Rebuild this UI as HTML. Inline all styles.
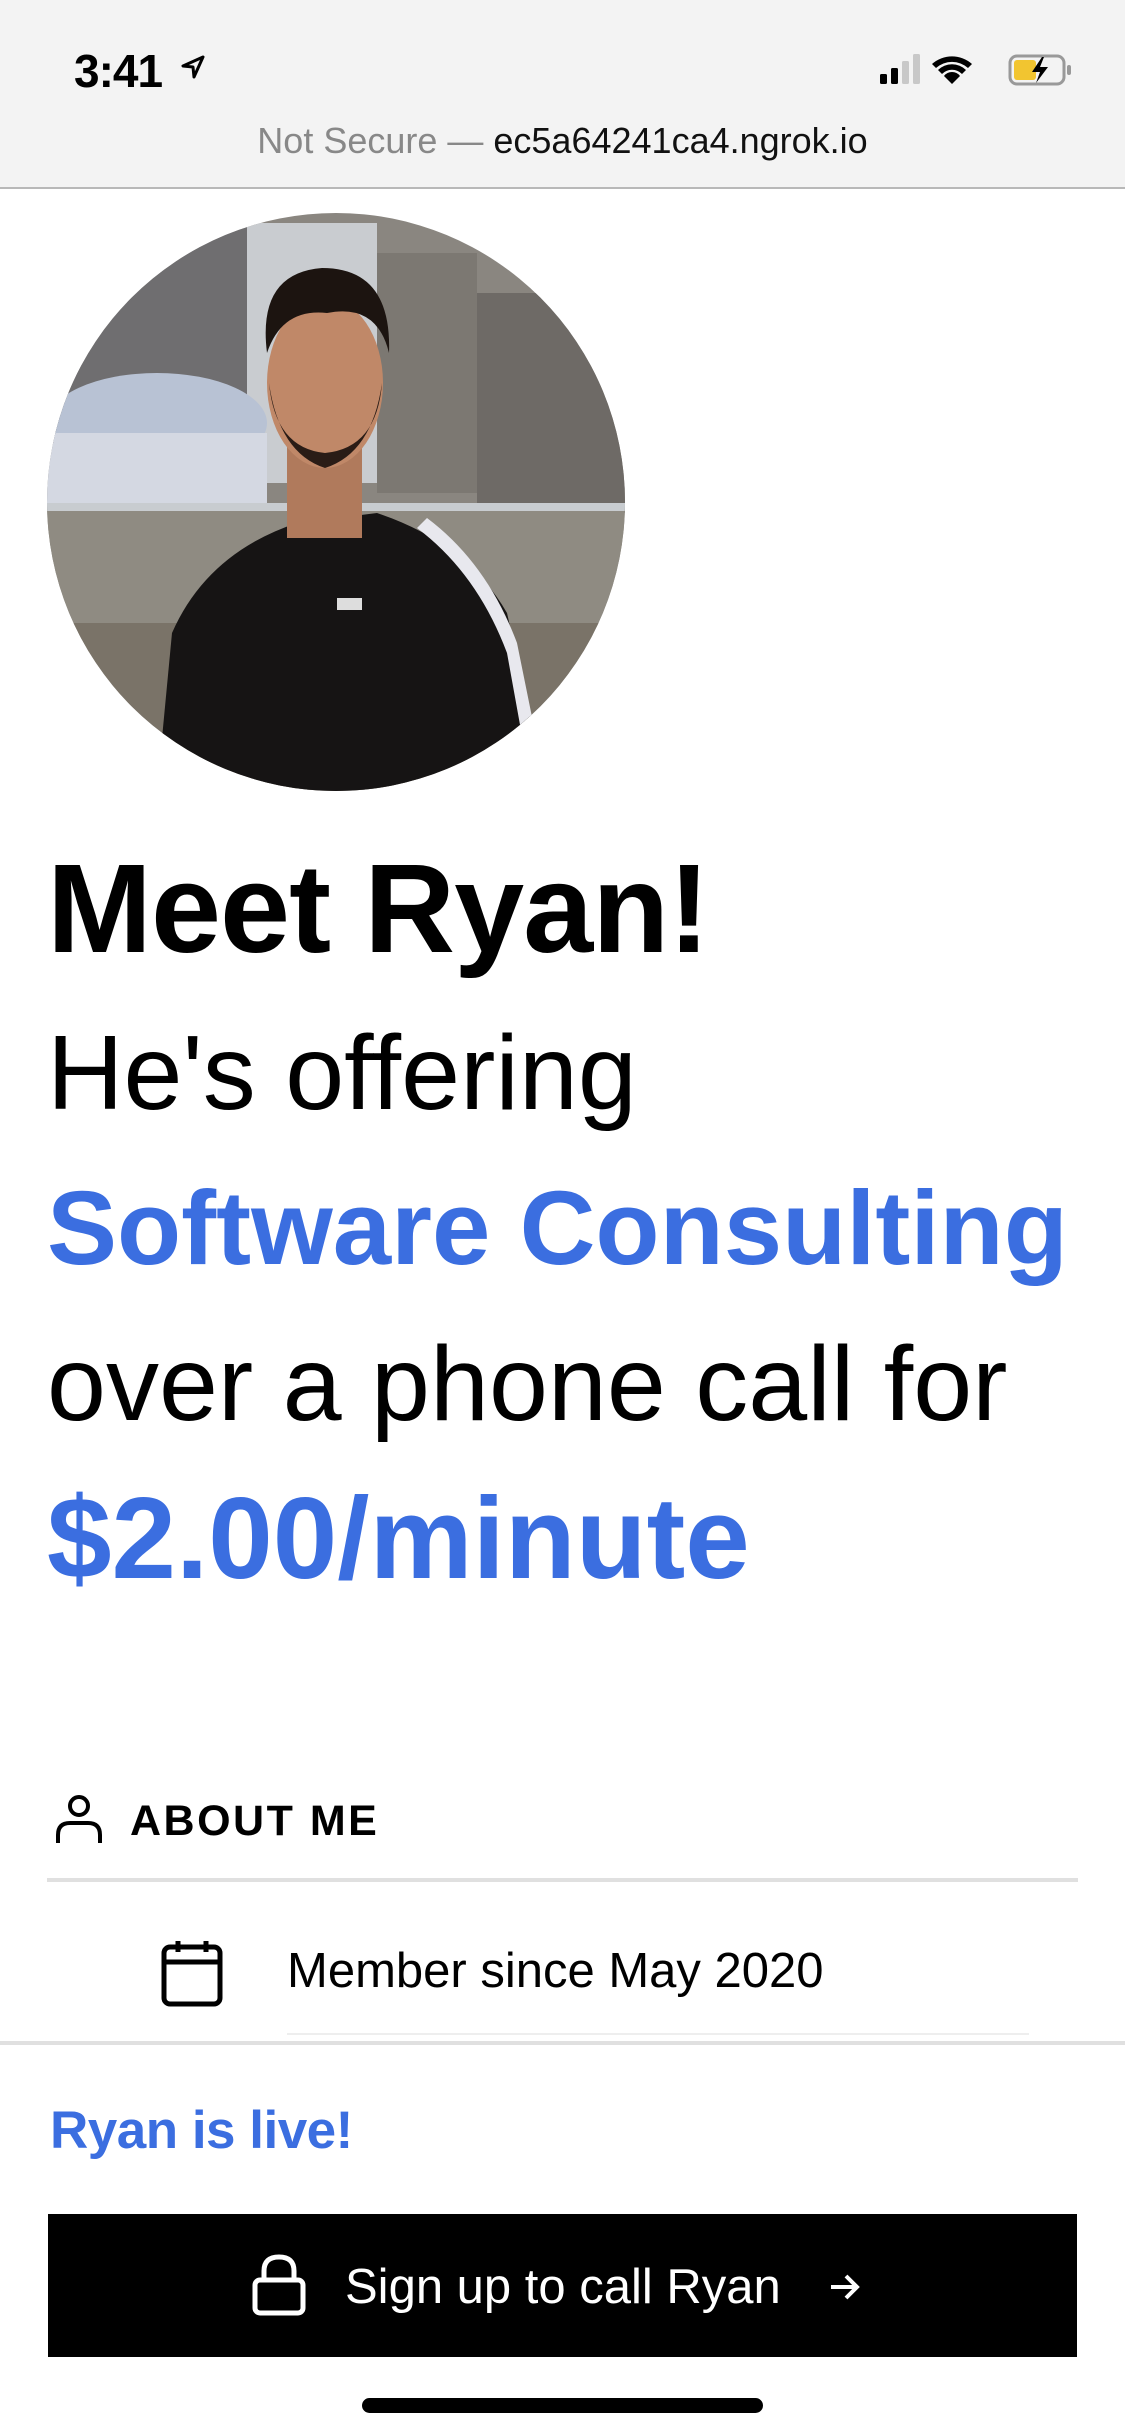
<!DOCTYPE html>
<html><head><meta charset="utf-8"><style>
*{margin:0;padding:0;box-sizing:border-box}
body{width:1125px;height:2436px;background:#fff;position:relative;overflow:hidden;font-family:"Liberation Sans",Arial,sans-serif;color:#000}
.abs{position:absolute;white-space:nowrap}
.top{position:absolute;left:0;top:0;width:1125px;height:189px;background:#f3f3f3;border-bottom:2px solid #b8b8b8}
.big{position:absolute;left:47px;font-size:106px;line-height:1}
.blue{color:#3b6ee0}
</style></head><body>
<div class="top"></div>
<div class="abs" style="left:74px;top:44px;font-size:46px;font-weight:bold;letter-spacing:-1px">3:41</div>
<svg class="abs" style="left:180px;top:54px" width="26" height="26" viewBox="0 0 26 26"><path d="M23 3L3 12l10 1 1 10z" fill="none" stroke="#000" stroke-width="3" stroke-linejoin="round"/></svg>
<svg class="abs" style="left:880px;top:52px" width="200" height="36" viewBox="0 0 200 36">
<rect x="0" y="22" width="7" height="10" rx="1.5"/><rect x="11" y="16" width="7" height="16" rx="1.5"/><rect x="22" y="9" width="7" height="23" rx="1.5" fill="#c8c8c8"/><rect x="33" y="2" width="7" height="30" rx="1.5" fill="#c8c8c8"/>
<path d="M52 12a30 30 0 0 1 40 0l-4 4a24 24 0 0 0-32 0z M58 18a20 20 0 0 1 28 0l-4 4a14 14 0 0 0-20 0z M64 24a10 10 0 0 1 16 0l-8 8z"/>
<rect x="130" y="4" width="54" height="28" rx="7" fill="none" stroke="#999" stroke-width="3"/><rect x="134" y="8" width="22" height="20" rx="3" fill="#f2c530"/><rect x="187" y="13" width="4" height="10" rx="2" fill="#999"/>
<path d="M162 5l-10 15h8l-4 11 12-16h-8l4-10z" fill="#000"/></svg>
<div class="abs" style="left:0;width:1125px;top:120px;text-align:center;font-size:36px;color:#888">Not Secure — <span style="color:#111">ec5a64241ca4.ngrok.io</span></div>

<svg class="abs" style="left:47px;top:213px" width="578" height="578" viewBox="0 0 578 578">
<defs><clipPath id="c"><circle cx="289" cy="289" r="289"/></clipPath></defs>
<g clip-path="url(#c)">
<rect width="578" height="578" fill="#8a8680"/>
<rect x="0" y="0" width="200" height="230" fill="#6f6e70"/>
<rect x="200" y="10" width="130" height="260" fill="#c9ccd0"/>
<rect x="330" y="40" width="100" height="240" fill="#7c7872"/>
<rect x="430" y="80" width="148" height="220" fill="#6e6a66"/>
<ellipse cx="110" cy="210" rx="110" ry="50" fill="#b8c2d4"/>
<rect x="0" y="220" width="220" height="70" fill="#d4d8e2"/>
<rect x="0" y="290" width="578" height="120" fill="#8f8b82"/>
<rect x="0" y="290" width="578" height="8" fill="#c8ccd0"/>
<rect x="0" y="410" width="578" height="168" fill="#7a7368"/>
<path d="M110 578 L125 420 Q160 340 250 310 L330 300 Q420 330 460 400 L500 578z" fill="#161414"/>
<path d="M380 305 Q440 350 470 430 L500 578 L485 578 L460 440 Q430 360 370 315z" fill="#e8e8ee"/>
<rect x="240" y="230" width="75" height="95" fill="#b07a5c"/>
<ellipse cx="278" cy="170" rx="58" ry="85" fill="#c08868"/>
<path d="M222 170 Q232 240 278 255 Q325 240 335 170 Q330 235 278 240 Q228 235 222 170z" fill="#2a1c16"/>
<path d="M220 140 Q210 60 275 55 Q345 55 342 140 Q330 90 280 100 Q235 95 220 140z" fill="#1c1410"/>
<rect x="290" y="385" width="25" height="12" fill="#ddd"/>
</g></svg>

<div class="big" style="top:846px;font-size:126px;font-weight:bold;letter-spacing:-1px">Meet Ryan!</div>
<div class="big" style="top:1020px">He's offering</div>
<div class="big blue" style="top:1176px;font-weight:bold;font-size:105px">Software Consulting</div>
<div class="big" style="top:1331px">over a phone call for</div>
<div class="big blue" style="top:1480px;font-weight:bold;font-size:116px">$2.00/minute</div>

<svg class="abs" style="left:54px;top:1793px" width="50" height="52" viewBox="0 0 50 52"><circle cx="25" cy="13" r="9" fill="none" stroke="#000" stroke-width="4"/><path d="M4 50V42Q4 30 16 30H34Q46 30 46 42V50" fill="none" stroke="#000" stroke-width="4"/></svg>
<div class="abs" style="left:130px;top:1797px;font-size:43px;font-weight:bold;letter-spacing:2.5px">ABOUT ME</div>
<div class="abs" style="left:47px;top:1878px;width:1031px;height:4px;background:#e0e0e0"></div>
<svg class="abs" style="left:160px;top:1938px" width="64" height="70" viewBox="0 0 64 70"><rect x="4" y="9" width="56" height="57" rx="6" fill="none" stroke="#000" stroke-width="5"/><path d="M4 24H60M18 3V14M46 3V14" stroke="#000" stroke-width="5"/></svg>
<div class="abs" style="left:287px;top:1943px;font-size:49px">Member since May 2020</div>
<div class="abs" style="left:287px;top:2033px;width:742px;height:2px;background:#eee"></div>
<div class="abs" style="left:0;top:2041px;width:1125px;height:4px;background:#e0e0e0"></div>
<div class="abs blue" style="left:50px;top:2100px;font-size:53px;font-weight:bold;letter-spacing:-0.5px">Ryan is live!</div>
<div class="abs" style="left:48px;top:2214px;width:1029px;height:143px;background:#000"></div>
<svg class="abs" style="left:252px;top:2254px" width="54" height="62" viewBox="0 0 54 62"><rect x="3" y="26" width="48" height="33" rx="5" fill="none" stroke="#fff" stroke-width="5"/><path d="M12 26V17Q12 3 27 3Q42 3 42 17V26" fill="none" stroke="#fff" stroke-width="5"/></svg>
<div class="abs" style="left:345px;top:2259px;font-size:49px;color:#fff">Sign up to call Ryan</div>
<svg class="abs" style="left:828px;top:2272px" width="34" height="30" viewBox="0 0 34 30"><path d="M3 15H29M18 4L29 15L18 26" fill="none" stroke="#fff" stroke-width="4"/></svg>
<div class="abs" style="left:362px;top:2398px;width:401px;height:15px;border-radius:8px;background:#000"></div>
</body></html>
